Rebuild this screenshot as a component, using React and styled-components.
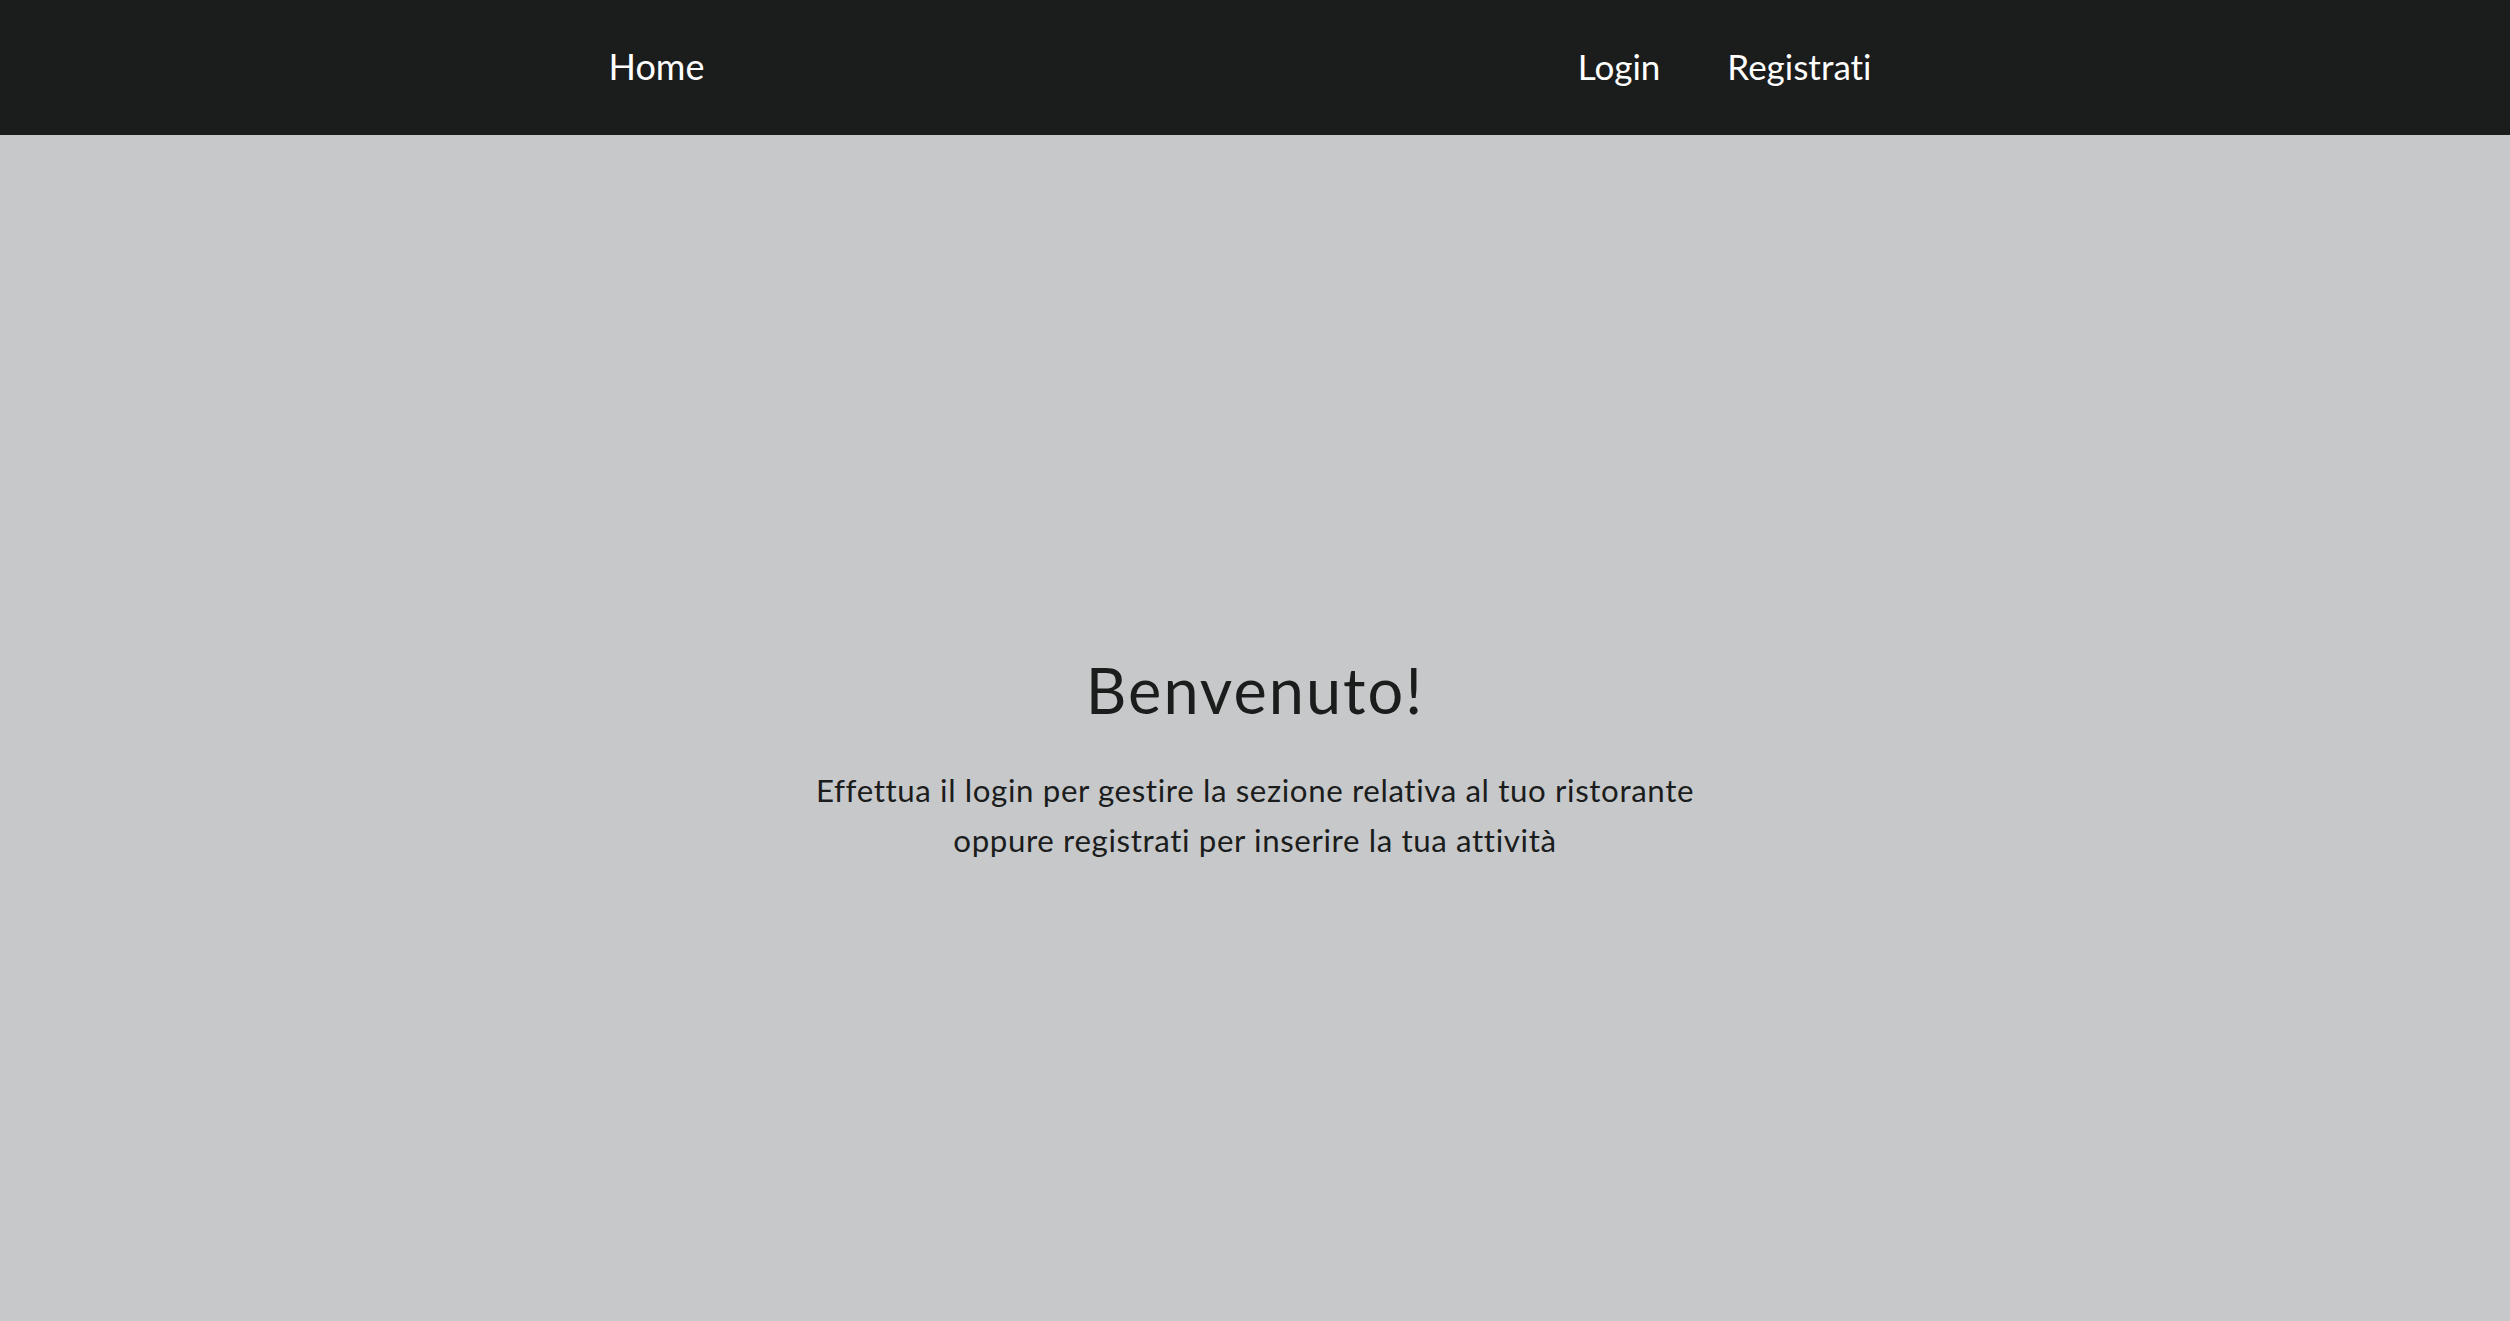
import React from 'react'
import styled, { createGlobalStyle } from 'styled-components'

const GlobalStyle = createGlobalStyle`
    html, body {
        margin: 0;
        padding: 0;
        background-color: #c7c8ca;
        font-family: Lato, "Open Sans", sans-serif;
        font-variant-ligatures: none;
        color: #1b1c1c;
    }
`

function App() {
  return (
    <>
      <GlobalStyle />
      <Header>
        <Container>
          <Brand href='#'>Home</Brand>
          <RightMenu>
            <NavLink href='#'>Login</NavLink>
            <NavLink href='#'>Registrati</NavLink>
          </RightMenu>
        </Container>
      </Header>
      <Hero>
        <Title>Benvenuto!</Title>
        <Lead>
          Effettua il login per gestire la sezione relativa al tuo ristorante
          <br />
          oppure registrati per inserire la tua attività
        </Lead>
      </Hero>
    </>
  )
}

export default App

const Header = styled.nav`
    background-color: #1b1c1c;
    height: 135px;
    box-sizing: border-box;
    padding-bottom: 3px;
    display: flex;
    align-items: center;
`

const Container = styled.div`
    width: 100%;
    max-width: 1320px;
    margin: 0 auto;
    padding: 0 12.5px;
    box-sizing: border-box;
    display: flex;
    align-items: center;
    justify-content: space-between;
`

const Brand = styled.a`
    color: #fff;
    text-decoration: none;
    font-size: 36px;
    line-height: 1.5;
    padding-left: 1px;
`

const RightMenu = styled.div`
    display: flex;
    align-items: center;
    gap: 67px;
    margin-right: 31px;
`

const NavLink = styled.a`
    color: #fff;
    text-decoration: none;
    font-size: 35px;
    line-height: 1.5;
`

const Hero = styled.main`
    min-height: calc(100vh - 135px);
    box-sizing: border-box;
    padding-top: 61px;
    display: flex;
    flex-direction: column;
    align-items: center;
    justify-content: center;
    text-align: center;
`

const Title = styled.h1`
    font-size: 63px;
    font-weight: 400;
    line-height: 1.2;
    letter-spacing: 2px;
    margin: 0 0 38px;
`

const Lead = styled.p`
    font-size: 31.25px;
    line-height: 50px;
    letter-spacing: 0.62px;
    margin: 0;
`
